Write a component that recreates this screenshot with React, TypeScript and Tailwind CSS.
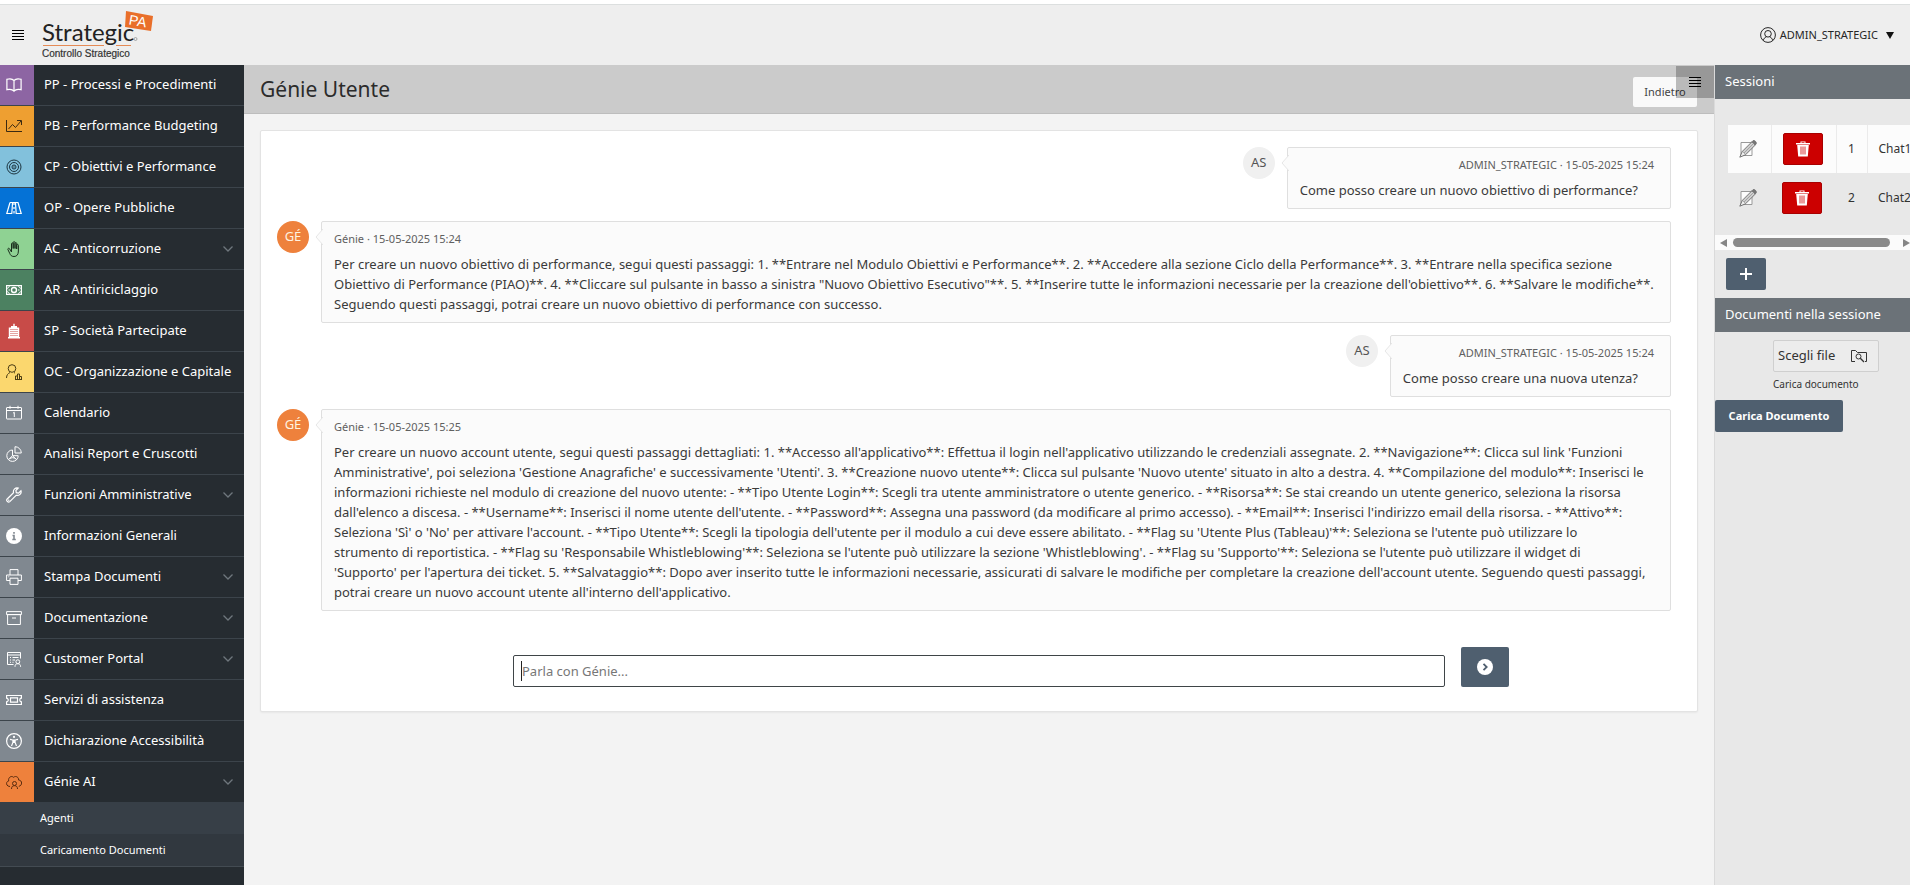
import React, { useState } from 'react';

type IconProps = { children: React.ReactNode; className?: string };

function Glyph({ children, className = 'size-4' }: IconProps) {
  return (
    <svg
      viewBox="0 0 16 16"
      className={className}
      fill="none"
      stroke="currentColor"
      strokeWidth="1"
      aria-hidden="true"
    >
      {children}
    </svg>
  );
}

const icons = {
  book: (
    <Glyph>
      <path d="M8 3.5v11M8 3.5C6.5 1.8 3.500 1.500.9 2.300v10.400c2.600-.7 5.600-.4 7.100 1.500 1.500-1.900 4.500-2.200 7.100-1.500V2.300C12.500 1.500 9.500 1.800 8 3.500z" strokeWidth="1.200" />
    </Glyph>
  ),
  chart: (
    <Glyph>
      <path d="M.5 2v11.500H16M2.500 11l4-4.500 3 3L15 3M11 2.500h4.500V7" />
    </Glyph>
  ),
  target: (
    <Glyph>
      <circle cx="8" cy="8" r="7" />
      <circle cx="8" cy="8" r="4.500" />
      <circle cx="8" cy="8" r="2" />
      <circle cx="8" cy="8" r=".7" fill="currentColor" stroke="none" />
    </Glyph>
  ),
  road: (
    <Glyph>
      <path d="M4 2.500h8l3.200 11h-5L9.800 8M4 2.500L.8 13.500h5L6.200 8M8 3v2M8 7v2M8 11v2.500M6.500 2.500L6.200 8M9.500 2.500l.3 5.500" strokeWidth="1.200" />
    </Glyph>
  ),
  hand: (
    <Glyph>
      <path d="M5.500 7.500V2.800c0-1.200 1.700-1.200 1.700 0V7.500 1.600c0-1.300 1.800-1.300 1.800 0v5.900-5c0-1.200 1.700-1.200 1.700 0V8 4.300c0-1.200 1.700-1.200 1.700 0V10c0 3.500-1.500 5.500-4.400 5.500-2.500 0-3.500-1.300-4.300-3.200L1.900 8.500c-.4-1.200 1.100-1.700 1.700-.7L5.500 11V7" />
    </Glyph>
  ),
  cash: (
    <Glyph>
      <rect x=".6" y="3.600" width="14.800" height="8.800" strokeWidth="1.200" />
      <circle cx="8" cy="8" r="2.500" strokeWidth="1.400" />
      <path d="M.6 6.300c1.800 0 2.700-1 2.700-2.700M15.400 6.300c-1.800 0-2.700-1-2.700-2.700M.6 9.700c1.800 0 2.700 1 2.700 2.700M15.400 9.700c-1.800 0-2.700 1-2.700 2.700M2.500 8h1.500M12 8h1.500" />
    </Glyph>
  ),
  building: (
    <Glyph>
      <path d="M2 15.500V14h.8V4.500H5V3h2.300V.8h1.400V3H11v1.500h2.200V14h.8v1.500z" fill="currentColor" stroke="none" />
      <path d="M4.500 6.500h7.500M4.500 8.500h7.500M4.500 10.500h7.500M4.500 12.500h7.500" stroke="#c84b48" strokeDasharray="1 1" />
    </Glyph>
  ),
  personChart: (
    <Glyph>
      <circle cx="6" cy="4.500" r="3.800" />
      <path d="M.5 14c0-3 1.500-4.500 3.500-5.500M8 8.500l1 .6M9.500 15.500v-3.500h2v3.500M11.500 15.500v-5.500h2v5.500M13.500 15.500v-3h2v3M9 15.500h7" />
    </Glyph>
  ),
  calendar: (
    <Glyph>
      <rect x=".5" y="2.500" width="15" height="11.500" rx=".5" />
      <path d="M.5 5.500h15M4 .8v3M12 .8v3M7 8.200l1.300-.9V12" />
    </Glyph>
  ),
  pie: (
    <Glyph>
      <path d="M6.500 4A5.700 5.700 0 1 0 12.200 9.700H6.500zM9 .7v6.300h6.300A6.300 6.300 0 0 0 9 .7zM6.500 9.700l-4 4M6.500 9.700l4.200 4M3.500 12.800c2-1.500 4.300-1.500 6.300 0" />
    </Glyph>
  ),
  wrench: (
    <Glyph>
      <path d="M15 3.800l-2.500 2.300-2.200-.4-.4-2.200L12.200 1C9.500.2 6.800 2.500 7.500 5.700L1.200 12c-1.500 1.600.9 4 2.600 2.600l6.300-6.300c3.200.8 5.700-1.800 4.900-4.500z" strokeWidth="1.200" />
      <circle cx="2.800" cy="13.200" r=".4" />
    </Glyph>
  ),
  info: (
    <Glyph>
      <circle cx="8" cy="8" r="8" fill="currentColor" stroke="none" />
      <path d="M8 4v1.700M6.500 7.500H8V11.500M6.300 11.500h3.500" stroke="#808890" strokeWidth="1.600" />
    </Glyph>
  ),
  printer: (
    <Glyph>
      <path d="M4 6V.6h8V6M4 11.500H.6V6h14.800v5.500H12M4 9.200h8v6.200H4zM2.300 7.800h1" />
    </Glyph>
  ),
  archive: (
    <Glyph>
      <path d="M.6 1.600h14.800v3H.6zM1.600 4.600h12.800v9.900H1.600zM6 8h4" />
    </Glyph>
  ),
  portal: (
    <Glyph>
      <path d="M7.500 13.500h-6v-12h13v6M1.500 4h13M4 6.500h1M6.500 6.500h6M4 9h1M6.500 9h2.500M4 11.300h1M6.500 11.300h1M9 15.800c0-2 .8-3 2.300-3h1c1.500 0 2.300 1 2.300 3" />
      <circle cx="11.800" cy="10.700" r="1.900" />
    </Glyph>
  ),
  ticket: (
    <Glyph>
      <path d="M.6 3.500h14.800v2.700c-2.200 0-2.200 3.600 0 3.600v2.700H.6V9.800c2.200 0 2.200-3.600 0-3.600zM4.500 5.800h7v4.400h-7z" strokeWidth="1.200" />
    </Glyph>
  ),
  access: (
    <Glyph>
      <circle cx="8" cy="8" r="7.400" strokeWidth="1.200" />
      <circle cx="8" cy="3.900" r="1.100" fill="currentColor" stroke="none" />
      <path d="M4 6.300l2.700.7h2.600l2.700-.7M6.900 7v2.500L5.500 13M9.100 7v2.500l1.400 3.500M8 7v3" strokeWidth="1.200" />
    </Glyph>
  ),
  cloud: (
    <Glyph>
      <path d="M4 12.500C-.2 12.500-.5 7.500 2.700 7 1.800 3.500 5.500 1.200 7.500 3.300 10 1.300 13 3.500 12.500 6c4.200.2 4 5.800.3 6.300" />
      <circle cx="8.500" cy="9.500" r="2" />
      <path d="M5.500 15c0-2.300 1-3.300 3-3.300s3 1 3 3.300" />
    </Glyph>
  ),
};

type NavEntry = { label: string; icon: keyof typeof icons; tone: string; menu?: boolean };

const nav: NavEntry[] = [
  { label: 'PP - Processi e Procedimenti', icon: 'book', tone: 'bg-[#8d65a3] text-white' },
  { label: 'PB - Performance Budgeting', icon: 'chart', tone: 'bg-[#ee9f31] text-[#3b2a12]' },
  { label: 'CP - Obiettivi e Performance', icon: 'target', tone: 'bg-[#82c1dc] text-[#1d3540]' },
  { label: 'OP - Opere Pubbliche', icon: 'road', tone: 'bg-[#0572d6] text-white' },
  { label: 'AC - Anticorruzione', icon: 'hand', tone: 'bg-[#8fd293] text-[#1b2f1d]', menu: true },
  { label: 'AR - Antiriciclaggio', icon: 'cash', tone: 'bg-[#4c8161] text-white' },
  { label: 'SP - Società Partecipate', icon: 'building', tone: 'bg-[#c84b48] text-white' },
  { label: 'OC - Organizzazione e Capitale', icon: 'personChart', tone: 'bg-[#fbd76e] text-[#4a3c14]' },
  { label: 'Calendario', icon: 'calendar', tone: 'bg-[#808890] text-white' },
  { label: 'Analisi Report e Cruscotti', icon: 'pie', tone: 'bg-[#808890] text-white' },
  { label: 'Funzioni Amministrative', icon: 'wrench', tone: 'bg-[#808890] text-white', menu: true },
  { label: 'Informazioni Generali', icon: 'info', tone: 'bg-[#808890] text-white' },
  { label: 'Stampa Documenti', icon: 'printer', tone: 'bg-[#808890] text-white', menu: true },
  { label: 'Documentazione', icon: 'archive', tone: 'bg-[#808890] text-white', menu: true },
  { label: 'Customer Portal', icon: 'portal', tone: 'bg-[#808890] text-white', menu: true },
  { label: 'Servizi di assistenza', icon: 'ticket', tone: 'bg-[#808890] text-white' },
  { label: 'Dichiarazione Accessibilità', icon: 'access', tone: 'bg-[#808890] text-white' },
  { label: 'Génie AI', icon: 'cloud', tone: 'bg-[#ee813c] text-[#5a2c10]', menu: true },
];

type Message = { author: string; initials: string; time: string; mine: boolean; text: string };

const messages: Message[] = [
  {
    author: 'ADMIN_STRATEGIC',
    initials: 'AS',
    time: '15-05-2025 15:24',
    mine: true,
    text: 'Come posso creare un nuovo obiettivo di performance?',
  },
  {
    author: 'Génie',
    initials: 'GÉ',
    time: '15-05-2025 15:24',
    mine: false,
    text: 'Per creare un nuovo obiettivo di performance, segui questi passaggi: 1. **Entrare nel Modulo Obiettivi e Performance**. 2. **Accedere alla sezione Ciclo della Performance**. 3. **Entrare nella specifica sezione Obiettivo di Performance (PIAO)**. 4. **Cliccare sul pulsante in basso a sinistra "Nuovo Obiettivo Esecutivo"**. 5. **Inserire tutte le informazioni necessarie per la creazione dell\'obiettivo**. 6. **Salvare le modifiche**. Seguendo questi passaggi, potrai creare un nuovo obiettivo di performance con successo.',
  },
  {
    author: 'ADMIN_STRATEGIC',
    initials: 'AS',
    time: '15-05-2025 15:24',
    mine: true,
    text: 'Come posso creare una nuova utenza?',
  },
  {
    author: 'Génie',
    initials: 'GÉ',
    time: '15-05-2025 15:25',
    mine: false,
    text: "Per creare un nuovo account utente, segui questi passaggi dettagliati: 1. **Accesso all'applicativo**: Effettua il login nell'applicativo utilizzando le credenziali assegnate. 2. **Navigazione**: Clicca sul link 'Funzioni Amministrative', poi seleziona 'Gestione Anagrafiche' e successivamente 'Utenti'. 3. **Creazione nuovo utente**: Clicca sul pulsante 'Nuovo utente' situato in alto a destra. 4. **Compilazione del modulo**: Inserisci le informazioni richieste nel modulo di creazione del nuovo utente: - **Tipo Utente Login**: Scegli tra utente amministratore o utente generico. - **Risorsa**: Se stai creando un utente generico, seleziona la risorsa dall'elenco a discesa. - **Username**: Inserisci il nome utente dell'utente. - **Password**: Assegna una password (da modificare al primo accesso). - **Email**: Inserisci l'indirizzo email della risorsa. - **Attivo**: Seleziona 'Sì' o 'No' per attivare l'account. - **Tipo Utente**: Scegli la tipologia dell'utente per il modulo a cui deve essere abilitato. - **Flag su 'Utente Plus (Tableau)'**: Seleziona se l'utente può utilizzare lo\nstrumento di reportistica. - **Flag su 'Responsabile Whistleblowing'**: Seleziona se l'utente può utilizzare la sezione 'Whistleblowing'. - **Flag su 'Supporto'**: Seleziona se l'utente può utilizzare il widget di\n'Supporto' per l'apertura dei ticket. 5. **Salvataggio**: Dopo aver inserito tutte le informazioni necessarie, assicurati di salvare le modifiche per completare la creazione dell'account utente. Seguendo questi passaggi,\npotrai creare un nuovo account utente all'interno dell'applicativo.",
  },
];

const sessions = [
  { id: 1, name: 'Chat1' },
  { id: 2, name: 'Chat2' },
];

function MenuLines() {
  return (
    <svg viewBox="0 0 12 10" className="h-[10px] w-3" stroke="currentColor" strokeWidth="1" aria-hidden="true">
      <path d="M0 .5h12M0 3.500h12M0 6.500h12M0 9.500h12" />
    </svg>
  );
}

function Logo() {
  return (
    <svg viewBox="0 0 120 56" className="h-14 w-[120px]" role="img" aria-label="Strategic PA">
      <text x="0" y="34" fontFamily="Lato, sans-serif" fontSize="24" fill="#222">
        Strategic
      </text>
      <path d="M1 38.500h61M74 38.500h15" stroke="#e58a55" strokeWidth="1.200" />
      <circle cx="93.500" cy="32" r="1.500" fill="none" stroke="#888" strokeWidth=".7" />
      <text x="0" y="50" fontFamily="'Liberation Sans', sans-serif" fontSize="10" fill="#333" stroke="#333" strokeWidth=".2">
        Controllo Strategico
      </text>
      <path d="M84 4l27 5-2 15-26-4z" fill="#e96f2a" />
      <text x="87" y="19" transform="rotate(10 97 14)" fontFamily="'Liberation Sans', sans-serif" fontSize="14" fill="#fff">
        PA
      </text>
    </svg>
  );
}

function Header() {
  return (
    <header className="flex h-[61px] shrink-0 items-center justify-between border-t border-[#dcdfdf] bg-[#eeeeee] pr-4 pl-3">
      <div className="flex items-center gap-[18px]">
        <button type="button" aria-label="Menu" className="text-black">
          <MenuLines />
        </button>
        <Logo />
      </div>
      <button type="button" className="flex items-center gap-1 text-[11px] text-[#262626]">
        <Glyph>
          <circle cx="8" cy="8" r="7.400" />
          <circle cx="8" cy="6.800" r="3.300" />
          <path d="M3.300 13.500c.4-2 1.500-3 3-3.500M12.700 13.500c-.4-2-1.500-3-3-3.500" />
        </Glyph>
        <span>ADMIN_STRATEGIC</span>
        <svg viewBox="0 0 8 7" className="ml-1 h-[7px] w-2" aria-hidden="true">
          <path d="M0 0h8L4 7z" fill="#111" />
        </svg>
      </button>
    </header>
  );
}

function Sidebar() {
  return (
    <nav className="w-[244px] shrink-0 bg-[#262c31] text-white">
      <ul>
        {nav.map((entry, i) => (
          <li key={entry.label} className={i < nav.length - 1 ? 'border-b border-[#3c444b]' : ''}>
            <a href="#" className="flex h-10 items-center whitespace-nowrap">
              <span className={`flex h-full w-[34px] items-center pl-[6px] ${entry.tone}`}>{icons[entry.icon]}</span>
              <span className="grow pl-[10px] text-[13px]">{entry.label}</span>
              {entry.menu && (
                <svg viewBox="0 0 10 6" className="mr-[11px] h-[6px] w-[10px]" aria-hidden="true">
                  <path d="M.5.5L5 5 9.500.5" fill="none" stroke="#6f777d" strokeWidth="1.300" />
                </svg>
              )}
            </a>
          </li>
        ))}
      </ul>
      <ul className="border-b border-[#434b52] text-[11px]">
        <li className="bg-[#373f47]">
          <a href="#" className="flex h-8 items-center pl-10">Agenti</a>
        </li>
        <li className="bg-[#31383f]">
          <a href="#" className="flex h-8 items-center pl-10">Caricamento Documenti</a>
        </li>
      </ul>
    </nav>
  );
}

function Bubble({ message }: { message: Message }) {
  return (
    <li className={`flex items-start gap-3 ${message.mine ? 'justify-end' : ''}`}>
      <span
        className={`flex size-8 shrink-0 items-center justify-center rounded-full text-[13px] ${
          message.mine ? 'bg-[#f0f0f0] text-[#555]' : 'bg-[#ee813c] text-[#fff3e0]'
        }`}
      >
        {message.initials}
      </span>
      <div className={`relative rounded-xs border border-[#dfdfdf] bg-[#fbfbfb] pt-2 pb-2 pl-3 ${message.mine ? 'pr-4' : 'grow pr-3'}`}>
        <svg viewBox="0 0 8 16" className="absolute top-[7px] -left-[7px] h-4 w-2" aria-hidden="true">
          <path d="M8 0L1 8l7 8" fill="#fbfbfb" stroke="#e6e6e6" />
        </svg>
        <p className={`text-[11px] leading-[18px] text-[#606060] ${message.mine ? 'text-right' : ''}`}>
          {message.author} · {message.time}
        </p>
        <p className={`pt-[6px] text-[13px] leading-5 whitespace-pre-line text-[#3a3a3a] ${message.mine ? 'pr-4' : ''}`}>{message.text}</p>
      </div>
    </li>
  );
}

function Chat() {
  const [draft, setDraft] = useState('');
  return (
    <section className="mx-4 mt-4 rounded-xs border border-[#e3e3e3] bg-white px-4 pb-6 pt-4 shadow-xs">
      <ul className="flex flex-col gap-3 pr-[10px]">
        {messages.map((m, i) => (
          <Bubble key={i} message={m} />
        ))}
      </ul>
      <form className="mt-9 grid grid-cols-12 items-end" onSubmit={(e) => e.preventDefault()}>
        <div className="col-span-8 col-start-3 mx-[2px] flex items-center rounded-xs border border-[#3f4548] bg-white px-[7px]">
          <span className="h-5 w-px bg-[#222]" />
          <input
            aria-label="Parla con Génie"
            className="h-[30px] grow bg-transparent text-[13px] text-[#333] outline-none placeholder:text-[#777]"
            placeholder="Parla con Génie..."
            value={draft}
            onChange={(e) => setDraft(e.target.value)}
          />
        </div>
        <button type="submit" aria-label="Invia" className="ml-[14px] flex h-10 w-12 items-center justify-center rounded-xs bg-[#4f5f6f]">
          <Glyph>
            <circle cx="8" cy="8" r="8" fill="#fff" stroke="none" />
            <path d="M6.500 4.800L9.700 8l-3.200 3.200" stroke="#4f5f6f" strokeWidth="1.800" />
          </Glyph>
        </button>
      </form>
    </section>
  );
}

function PanelTitle({ children }: { children: React.ReactNode }) {
  return <h2 className="flex h-[34px] items-center bg-[#6b7278] pl-[10px] text-[13px] text-white">{children}</h2>;
}

function EditIcon() {
  return (
    <svg viewBox="0 0 18 18" className="size-[18px]" aria-hidden="true">
      <path d="M2 2.500h11v13H2z" fill="#fdfdfd" stroke="#999" />
      <path d="M3.200 11.500L13 1.700l3.300 3.300L6.500 14.800z" fill="#cfcfcf" stroke="#6a6a6a" strokeWidth=".9" />
      <path d="M13 1.700l1.200-1.200c1-.8 3.800 1.800 3.200 3L16.300 5z" fill="#777" stroke="#666" strokeWidth=".6" />
      <path d="M3.200 11.500L.8 17.200l5.700-2.400" fill="#eee" stroke="#666" strokeWidth=".9" />
      <path d="M5 13L14.500 3.500" stroke="#999" strokeWidth=".8" />
    </svg>
  );
}

function TrashIcon() {
  return (
    <svg viewBox="0 0 16 16" className="size-4" aria-hidden="true">
      <path d="M1 2h4.500V.6h5V2H15v1.400H1zM2.200 4h11.600l-1 11.500H3.200z" fill="#fff" />
      <path d="M6 5.500v8M8 5.500v8M10 5.500v8" stroke="#c00" strokeWidth=".8" />
      <path d="M6.500 1.500h3" stroke="#c00" strokeWidth=".7" />
    </svg>
  );
}

function SessionPanel() {
  return (
    <aside className="w-[196px] shrink-0 overflow-hidden border-l border-[#dadada] bg-[#e8e8e8] text-[#333]">
      <PanelTitle>Sessioni</PanelTitle>
      <div className="overflow-hidden pt-[26px] pb-[13px] pl-[13px]">
        <table className="w-60 table-fixed text-left text-[12px]">
          <colgroup>
            <col className="w-[43px]" />
            <col className="w-[65px]" />
            <col className="w-[31px]" />
            <col />
          </colgroup>
          <tbody>
            {sessions.map((s, i) => (
              <tr key={s.id} className={i === 0 ? 'h-[48px] bg-[#fcfcfc] [&>td]:border-r [&>td]:border-[#ebebeb]' : 'h-[49px]'}>
                <td className="pl-[11px]">
                  <a href="#" aria-label="Modifica" className="block">
                    <EditIcon />
                  </a>
                </td>
                <td className="pl-[11px]">
                  <button type="button" aria-label="Elimina" className="flex h-8 w-10 items-center justify-center rounded-xs border border-[#a80000] bg-[#cc0000]">
                    <TrashIcon />
                  </button>
                </td>
                <td className="text-center">{s.id}</td>
                <td className="pl-[11px]">{s.name}</td>
              </tr>
            ))}
          </tbody>
        </table>
      </div>
      <div className="flex h-[15px] items-center gap-[6px] bg-[#fbfbfb] pl-[5px]" aria-hidden="true">
        <svg viewBox="0 0 7 8" className="h-2 w-[7px] shrink-0">
          <path d="M7 0v8L0 4z" fill="#858585" />
        </svg>
        <span className="h-[9px] grow rounded-full bg-[#8a8a8a]" />
        <svg viewBox="0 0 7 8" className="ml-[7px] h-2 w-[7px] shrink-0">
          <path d="M0 0v8l7-4z" fill="#858585" />
        </svg>
      </div>
      <div className="px-[11px] py-2">
        <button type="button" aria-label="Nuova sessione" className="flex h-8 w-10 items-center justify-center rounded-xs bg-[#4f5f6f]">
          <svg viewBox="0 0 12 12" className="size-3" aria-hidden="true">
            <path d="M6 0v12M0 6h12" stroke="#fff" strokeWidth="2" />
          </svg>
        </button>
      </div>
      <PanelTitle>Documenti nella sessione</PanelTitle>
      <div className="pt-2 pl-[58px]">
        <button type="button" className="flex h-8 w-[106px] items-center justify-between rounded-xs border border-[#cfcfcf] bg-[#ececec] pr-[10px] pl-1 text-[13px]">
          Scegli file
          <svg viewBox="0 0 18 14" className="h-[14px] w-[18px]" fill="none" stroke="#333" aria-hidden="true">
            <path d="M5 12.500H1.500V1.500h4l2 2h9v9H15" />
            <circle cx="8.500" cy="7.500" r="2.500" />
            <path d="M10.300 9.300l3.700 3.700" strokeWidth="1.300" />
          </svg>
        </button>
        <p className="pt-[3px] text-[10px] leading-[18px]">Carica documento</p>
      </div>
      <button type="button" className="mt-[7px] h-8 w-32 rounded-xs bg-[#4f5f6f] text-[11px] font-bold text-white">
        Carica Documento
      </button>
    </aside>
  );
}

export default function App() {
  return (
    <div className="flex min-h-screen flex-col bg-white pt-1 font-['Noto_Sans',sans-serif]">
      <Header />
      <div className="flex grow">
        <Sidebar />
        <main className="min-w-0 grow bg-[#f3f3f3]">
          <div className="relative flex h-[49px] items-center justify-between border-b border-[#bdbdbd] bg-[#cbcbcb] pr-[17px] pl-4">
            <h1 className="pt-px text-[21px] text-[#2b2b2b]">Génie Utente</h1>
            <button type="button" className="mt-[6px] h-[30px] w-16 rounded-xs bg-[#f9f9f9] text-[11px] text-[#444]">
              Indietro
            </button>
            <button type="button" aria-label="Mostra pannello" className="absolute top-px right-0 flex h-8 w-[38px] items-center justify-center bg-black/25 text-black">
              <MenuLines />
            </button>
          </div>
          <Chat />
        </main>
        <SessionPanel />
      </div>
    </div>
  );
}
